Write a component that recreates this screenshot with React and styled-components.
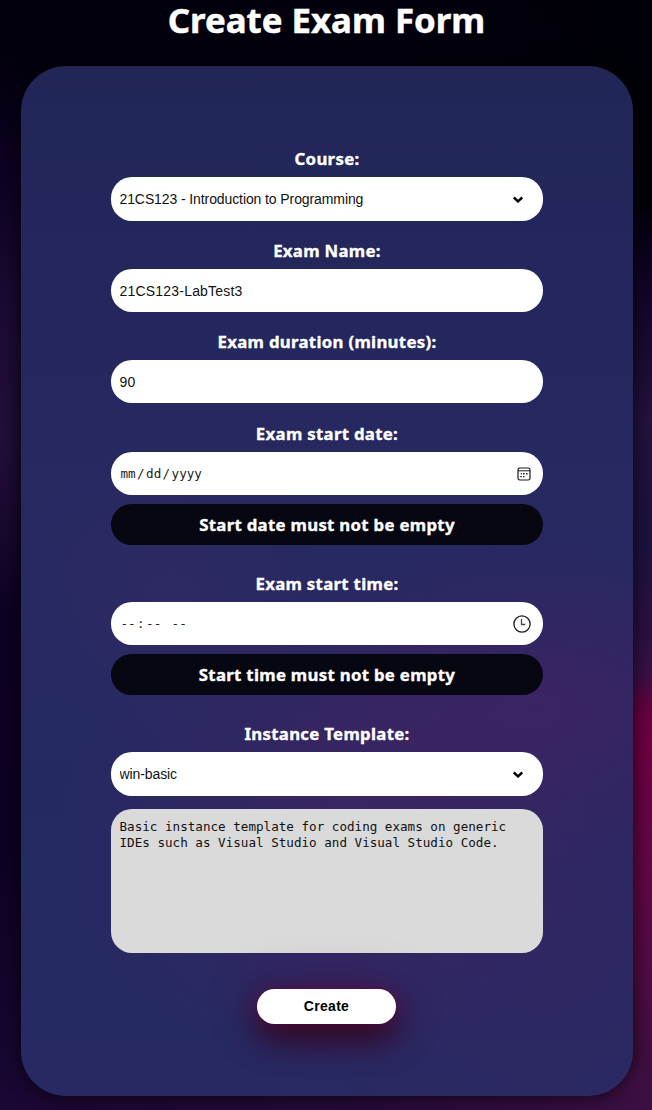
import React from "react";
import styled, { createGlobalStyle } from "styled-components";

const GlobalStyle = createGlobalStyle`
  * { box-sizing: border-box; }
  body { margin: 0; background: #02000c; }
`;

const Page = styled.main`
  height: 1110px;
  overflow: hidden;
  display: flex;
  flex-direction: column;
  align-items: center;
  padding-left: 2px;
  font-family: "Noto Sans", "Open Sans", sans-serif;
  background:
    radial-gradient(ellipse 30px 190px at 0 430px, rgba(60, 22, 76, 0.3), transparent),
    linear-gradient(to right, transparent 60%, #000008 100%) top / 100% 210px no-repeat,
    linear-gradient(to right, #1b0734, #250a38 50%, #3c0f43) bottom / 100% 16px no-repeat,
    linear-gradient(
      to bottom,
      #000008 0,
      #02000c 200px,
      #14052c 300px,
      #24123f 420px,
      #1c1240 540px,
      #2c1045 630px,
      #3c0f48 675px,
      #690042 710px,
      #700044 745px,
      #620747 880px,
      #400f43 1070px,
      #3c0f43 1110px
    ) right / 60px 100% no-repeat,
    linear-gradient(
      to bottom,
      #02000c 0,
      #04000f 70px,
      #0b0120 150px,
      #170930 290px,
      #1a0b33 440px,
      #0d0224 610px,
      #0d0224 850px,
      #160731 1050px,
      #1b0734 1110px
    );
`;

const Title = styled.h1`
  margin: 0 1px 0 0;
  height: 66px;
  line-height: 40px;
  font-size: 34.8px;
  font-weight: 700;
  -webkit-text-stroke: 0.5px #fff;
  color: #fff;
  white-space: nowrap;
`;

const Card = styled.form`
  width: 612px;
  height: 1030px;
  flex: none;
  display: flex;
  flex-direction: column;
  align-items: center;
  padding: 81px 90px 0;
  border-radius: 45px;
  box-shadow: 0 0 18px 2px rgba(0, 0, 0, 0.62);
  background:
    radial-gradient(ellipse 300px 170px at 520px 640px, rgba(67, 34, 99, 0.7), transparent),
    radial-gradient(ellipse 270px 250px at 310px 760px, rgba(66, 35, 98, 0.65), transparent),
    radial-gradient(ellipse 170px 150px at 150px 530px, rgba(51, 42, 100, 0.6), transparent),
    radial-gradient(ellipse 330px 330px at 520px 850px, rgba(54, 38, 98, 0.6), transparent),
    linear-gradient(to bottom, #212657, #24275d 240px, #272961 450px, #252962 720px, #272a62);
`;

const Field = styled.div`
  width: 100%;
  display: flex;
  flex-direction: column;
  margin-bottom: ${(p) => p.$gap ?? 18}px;
`;

const Label = styled.label`
  height: 30px;
  line-height: 24px;
  text-align: center;
  font-size: 16.8px;
  font-weight: 700;
  letter-spacing: 0.3px;
  -webkit-text-stroke: 0.35px #fff;
  color: #fff;
`;

const Control = styled.div`
  height: ${(p) => p.$height ?? 43}px;
  display: flex;
  align-items: center;
  padding: 0 ${(p) => p.$inset ?? 12}px 0 8.5px;
  border-radius: 21px;
  background: #fff;
  color: #000;
`;

const Input = styled.input`
  flex: 1;
  min-width: 0;
  border: 0;
  padding: 0;
  outline: 0;
  background: transparent;
  color: #111;
  font: 14px "Liberation Sans", Arial, sans-serif;
  letter-spacing: 0.2px;
`;

const Select = styled.select`
  flex: 1;
  min-width: 0;
  appearance: none;
  border: 0;
  padding: 0;
  background: transparent;
  color: #111;
  font: 14px "Liberation Sans", Arial, sans-serif;
  letter-spacing: -0.1px;
`;

const Picker = styled.div`
  flex: 1;
  display: flex;
  padding-left: 1px;
  color: #222;
  white-space: pre;
  font: 12.6px "DejaVu Sans Mono", monospace;
`;

const Separator = styled.span`
  padding: 0 1.4px;
`;

const ErrorMessage = styled.div`
  height: 41px;
  margin-top: 9px;
  line-height: 41px;
  border-radius: 21px;
  background: #070711;
  color: #fff;
  font-size: 16.8px;
  font-weight: 700;
  letter-spacing: 0.3px;
  -webkit-text-stroke: 0.35px #fff;
  text-align: center;
`;

const Description = styled.textarea`
  height: 144px;
  margin: 13px 0 0;
  padding: 10px 8.5px;
  border: 0;
  border-radius: 21px;
  resize: none;
  overflow: hidden;
  background: #dadada;
  color: #111;
  font: 12.6px/16px "DejaVu Sans Mono", monospace;
`;

const CreateButton = styled.button`
  width: 139px;
  height: 35px;
  margin-right: 1px;
  padding: 0 0 1px;
  border: 0;
  border-radius: 18px;
  background: #fff;
  color: #000;
  font: 700 14px "Liberation Sans", Arial, sans-serif;
  letter-spacing: 0.3px;
  box-shadow:
    0 0 14px rgba(112, 0, 64, 0.5),
    0 16px 32px rgba(45, 3, 22, 0.9),
    0 0 50px rgba(95, 15, 75, 0.35);
`;

const Chevron = () => (
  <svg width="10" height="7" viewBox="0 0 10 7" fill="none" stroke="#000" strokeWidth="2.4">
    <path d="M.8 1.5 5 5.4 9.2 1.5" />
  </svg>
);

const CalendarIcon = () => (
  <svg width="14" height="14" viewBox="0 0 14 14" fill="none" stroke="#1c1c1c">
    <rect x="1" y="1" width="12" height="12" rx="1.8" strokeWidth="1.2" />
    <path d="M1 3.8h12" />
    <path d="M6 6.7h1.5M9 6.7h1.5M3.3 9.6h1.5M6 9.6h1.5M3.8 6.7h1" strokeWidth="1.4" />
  </svg>
);

const ClockIcon = () => (
  <svg width="18" height="18" viewBox="0 0 18 18" fill="none" stroke="#1c1c1c" strokeWidth="1.3">
    <circle cx="9" cy="9" r="8.1" />
    <path d="M8.5 4v5.5h3.7" stroke="#444" />
  </svg>
);

export default function App() {
  return (
    <Page>
      <GlobalStyle />
      <Title>Create Exam Form</Title>
      <Card>
        <Field>
          <Label htmlFor="course">Course:</Label>
          <Control $height={44} $inset={20}>
            <Select id="course">
              <option>21CS123 - Introduction to Programming</option>
            </Select>
            <Chevron />
          </Control>
        </Field>
        <Field>
          <Label htmlFor="name">Exam Name:</Label>
          <Control>
            <Input id="name" defaultValue="21CS123-LabTest3" />
          </Control>
        </Field>
        <Field $gap={19}>
          <Label htmlFor="duration">Exam duration (minutes):</Label>
          <Control>
            <Input id="duration" defaultValue="90" />
          </Control>
        </Field>
        <Field $gap={27}>
          <Label>Exam start date:</Label>
          <Control>
            <Picker>
              mm<Separator>/</Separator>dd<Separator>/</Separator>yyyy
            </Picker>
            <CalendarIcon />
          </Control>
          <ErrorMessage>Start date must not be empty</ErrorMessage>
        </Field>
        <Field $gap={27}>
          <Label>Exam start time:</Label>
          <Control>
            <Picker>
              --<Separator>:</Separator>--<Separator> </Separator>--
            </Picker>
            <ClockIcon />
          </Control>
          <ErrorMessage>Start time must not be empty</ErrorMessage>
        </Field>
        <Field $gap={36}>
          <Label htmlFor="template">Instance Template:</Label>
          <Control $height={44} $inset={20}>
            <Select id="template">
              <option>win-basic</option>
            </Select>
            <Chevron />
          </Control>
          <Description
            readOnly
            defaultValue={
              "Basic instance template for coding exams on generic\nIDEs such as Visual Studio and Visual Studio Code."
            }
          />
        </Field>
        <CreateButton type="button">Create</CreateButton>
      </Card>
    </Page>
  );
}
